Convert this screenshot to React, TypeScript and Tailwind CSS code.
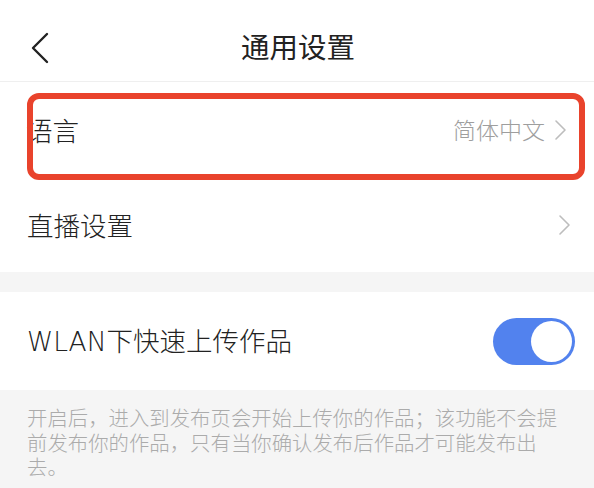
import React from "react";

const Chevron = () => (
  <svg width="16" height="22" viewBox="0 0 16 22" fill="none">
    <polyline points="4,2 13,11 4,20" stroke="#bdbdbd" strokeWidth="1.6" strokeLinecap="round" strokeLinejoin="round" />
  </svg>
);

const App = () => {
  return (
    <div
      className="relative w-[594px] h-[488px] overflow-hidden bg-[#f5f5f5] font-light"
      style={{ fontFamily: '"Noto Sans CJK SC", "Noto Sans", sans-serif' }}
    >
      {/* header */}
      <div className="relative flex h-[82px] items-center justify-center bg-white pt-[12px] border-b border-[#efefef]">
        <span className="absolute left-[30px] top-[32px]">
          <svg width="20" height="32" viewBox="0 0 20 32" fill="none">
            <polyline points="17,2 3,16 17,30" stroke="#222" strokeWidth="2.4" strokeLinecap="round" strokeLinejoin="round" />
          </svg>
        </span>
        <h1 className="pl-[2px] text-[28.5px] leading-none text-[#222] font-normal">通用设置</h1>
      </div>

      <div className="bg-white">
        <div className="flex h-[95px] items-center justify-between pl-[26px] pr-[26px]">
          <span className="text-[26.5px] text-[#222]">语言</span>
          <div className="flex items-center gap-[7px]">
            <span className="text-[23px] text-[#9e9e9e]">简体中文</span>
            <Chevron />
          </div>
        </div>
        <div className="flex h-[95px] items-center justify-between pl-[27px] pr-[22px]">
          <span className="text-[26.5px] text-[#222]">直播设置</span>
          <Chevron />
        </div>
      </div>

      <div className="mt-[20px] flex h-[98px] items-center justify-between bg-white pl-[27px] pr-[19px]">
        <span className="text-[26.5px] text-[#222]">
          <span className="font-[DejaVu_Sans] font-extralight">WLAN</span>下快速上传作品
        </span>
        <div className="flex h-[47px] w-[82px] items-center justify-end rounded-full bg-[#5282ee] pr-[3px]">
          <div className="h-[41px] w-[41px] rounded-full bg-white" />
        </div>
      </div>

      <p className="pl-[27px] pr-[30px] pt-[15px] text-[20.4px] leading-[24.5px] text-[#ababab]">
        开启后，进入到发布页会开始上传你的作品；该功能不会提前发布你的作品，只有当你确认发布后作品才可能发布出去。
      </p>

      {/* red highlight box */}
      <div className="absolute left-[27px] top-[93px] h-[87px] w-[558px] rounded-[12px] border-[6px] border-[#e9432c]" />
    </div>
  );
};

export default App;
